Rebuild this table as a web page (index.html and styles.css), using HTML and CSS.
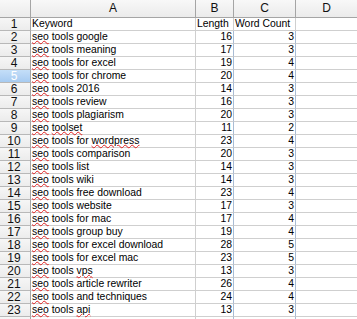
FILE: index.html
```html
<!DOCTYPE html>
<html>
<head>
<meta charset="utf-8">
<link rel="stylesheet" href="styles.css">
</head>
<body>
<div class="sheet">
  <div class="corner"></div><div class="colh">A</div><div class="colh">B</div><div class="colh">C</div><div class="colh last">D</div>

  <div class="rowh">1</div><div class="cell">Keyword</div><div class="cell">Length</div><div class="cell">Word Count</div><div class="cell d"></div>
  <div class="rowh">2</div><div class="cell"><span class="sp">seo</span> tools google</div><div class="cell num pb">16</div><div class="cell num pb">3</div><div class="cell d"></div>
  <div class="rowh">3</div><div class="cell"><span class="sp">seo</span> tools meaning</div><div class="cell num pb">17</div><div class="cell num pb">3</div><div class="cell d"></div>
  <div class="rowh">4</div><div class="cell"><span class="sp">seo</span> tools for excel</div><div class="cell num pb">19</div><div class="cell num pb">4</div><div class="cell d"></div>
  <div class="rowh sel">5</div><div class="cell"><span class="sp">seo</span> tools for chrome</div><div class="cell num pb">20</div><div class="cell num pb">4</div><div class="cell d"></div>
  <div class="rowh">6</div><div class="cell"><span class="sp">seo</span> tools 2016</div><div class="cell num pb">14</div><div class="cell num pb">3</div><div class="cell d"></div>
  <div class="rowh">7</div><div class="cell"><span class="sp">seo</span> tools review</div><div class="cell num pb">16</div><div class="cell num pb">3</div><div class="cell d"></div>
  <div class="rowh">8</div><div class="cell"><span class="sp">seo</span> tools plagiarism</div><div class="cell num pb">20</div><div class="cell num pb">3</div><div class="cell d"></div>
  <div class="rowh">9</div><div class="cell"><span class="sp">seo</span> <span class="sp">toolset</span></div><div class="cell num pb">11</div><div class="cell num pb">2</div><div class="cell d"></div>
  <div class="rowh">10</div><div class="cell"><span class="sp">seo</span> tools for <span class="sp">wordpress</span></div><div class="cell num pb">23</div><div class="cell num pb">4</div><div class="cell d"></div>
  <div class="rowh">11</div><div class="cell"><span class="sp">seo</span> tools comparison</div><div class="cell num pb">20</div><div class="cell num pb">3</div><div class="cell d"></div>
  <div class="rowh">12</div><div class="cell"><span class="sp">seo</span> tools list</div><div class="cell num pb">14</div><div class="cell num pb">3</div><div class="cell d"></div>
  <div class="rowh">13</div><div class="cell"><span class="sp">seo</span> tools wiki</div><div class="cell num pb">14</div><div class="cell num pb">3</div><div class="cell d"></div>
  <div class="rowh">14</div><div class="cell"><span class="sp">seo</span> tools free download</div><div class="cell num pb">23</div><div class="cell num pb">4</div><div class="cell d"></div>
  <div class="rowh">15</div><div class="cell"><span class="sp">seo</span> tools website</div><div class="cell num pb">17</div><div class="cell num pb">3</div><div class="cell d"></div>
  <div class="rowh">16</div><div class="cell"><span class="sp">seo</span> tools for mac</div><div class="cell num pb">17</div><div class="cell num pb">4</div><div class="cell d"></div>
  <div class="rowh">17</div><div class="cell"><span class="sp">seo</span> tools group buy</div><div class="cell num pb">19</div><div class="cell num pb">4</div><div class="cell d"></div>
  <div class="rowh">18</div><div class="cell"><span class="sp">seo</span> tools for excel download</div><div class="cell num pb">28</div><div class="cell num pb">5</div><div class="cell d"></div>
  <div class="rowh">19</div><div class="cell"><span class="sp">seo</span> tools for excel mac</div><div class="cell num pb">23</div><div class="cell num pb">5</div><div class="cell d"></div>
  <div class="rowh">20</div><div class="cell"><span class="sp">seo</span> tools <span class="sp">vps</span></div><div class="cell num pb">13</div><div class="cell num pb">3</div><div class="cell d"></div>
  <div class="rowh">21</div><div class="cell"><span class="sp">seo</span> tools article rewriter</div><div class="cell num pb">26</div><div class="cell num pb">4</div><div class="cell d"></div>
  <div class="rowh">22</div><div class="cell"><span class="sp">seo</span> tools and techniques</div><div class="cell num pb">24</div><div class="cell num pb">4</div><div class="cell d"></div>
  <div class="rowh">23</div><div class="cell"><span class="sp">seo</span> tools <span class="sp">api</span></div><div class="cell num pb">13</div><div class="cell num pb">3</div><div class="cell d"></div>
  <div class="rowh"></div><div class="cell"></div><div class="cell pb"></div><div class="cell pb"></div><div class="cell d"></div>
</div>
</body>
</html>
```

FILE: styles.css
```css
html, body {
  margin: 0;
  padding: 0;
  background: #ffffff;
  overflow: hidden;
}

.sheet {
  display: grid;
  grid-template-columns: 31px 165px 38px 62px 1fr;
  grid-template-rows: 18px repeat(24, 13px);
  width: 357px;
  font-family: "Liberation Sans", Arial, sans-serif;
  color: #000000;
}

.corner,
.colh {
  background: linear-gradient(#f8f8f8, #ebebeb);
  border-right: 1px solid #a5a5a5;
  border-bottom: 1px solid #a5a5a5;
  box-sizing: border-box;
}

.colh {
  font-size: 12px;
  line-height: 17px;
  text-align: center;
  color: #111111;
}

.colh.last {
  border-right: none;
}

.rowh {
  background: linear-gradient(#f6f6f6, #ececec);
  border-right: 1px solid #a5a5a5;
  border-bottom: 1px solid #b8b8b8;
  box-sizing: border-box;
  font-size: 12px;
  line-height: 13px;
  text-align: center;
  padding-right: 2px;
  color: #111111;
}

.rowh.sel {
  background: linear-gradient(#c4def8, #a7cbf1);
  color: #ffffff;
}

.cell {
  border-right: 1px solid #cfcfcf;
  border-bottom: 1px solid #cfcfcf;
  box-sizing: border-box;
  font-size: 10.4px;
  line-height: 12px;
  padding-left: 1px;
  white-space: nowrap;
}

.cell.num {
  text-align: right;
  padding-left: 0;
  padding-right: 1px;
}

.cell.pb {
  border-right-color: #a9bcd4;
}

.cell.d {
  border-right: none;
}

.sp {
  text-decoration-line: underline;
  text-decoration-style: wavy;
  text-decoration-color: #e02020;
  text-decoration-thickness: 1px;
  text-underline-offset: 0px;
}
```
